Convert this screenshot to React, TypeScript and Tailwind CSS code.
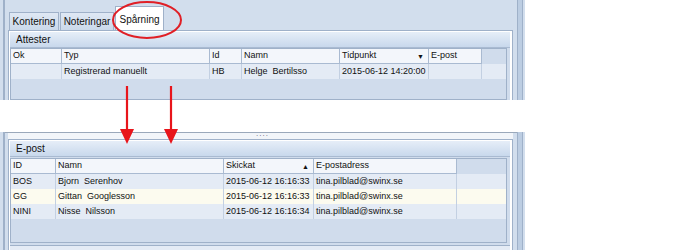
import React from 'react';

type Col = { label: string; w: number; sort?: 'up' | 'down' };

const attestCols: Col[] = [
  { label: 'Ok', w: 51 },
  { label: 'Typ', w: 148 },
  { label: 'Id', w: 32 },
  { label: 'Namn', w: 98 },
  { label: 'Tidpunkt', w: 89, sort: 'down' },
  { label: 'E-post', w: 53 },
];

const attestRows = [['', 'Registrerad manuellt', 'HB', 'Helge  Bertilsso', '2015-06-12 14:20:00', '']];

const mailCols: Col[] = [
  { label: 'ID', w: 45 },
  { label: 'Namn', w: 168 },
  { label: 'Skickat', w: 90, sort: 'up' },
  { label: 'E-postadress', w: 143 },
];

const mailRows = [
  ['BOS', 'Bjorn  Serenhov', '2015-06-12 16:16:33', 'tina.pilblad@swinx.se'],
  ['GG', 'Gittan  Googlesson', '2015-06-12 16:16:33', 'tina.pilblad@swinx.se'],
  ['NINI', 'Nisse  Nilsson', '2015-06-12 16:16:34', 'tina.pilblad@swinx.se'],
];

function Grid({ cols, rows, altIndex }: { cols: Col[]; rows: string[][]; altIndex?: number }) {
  return (
    <div className="flex-1 border border-[#9fb1c9] bg-[#d0dcec]">
      <div className="flex h-[15px]">
        {cols.map((c, i) => (
          <div
            key={i}
            style={{ width: c.w }}
            className="flex items-center justify-between border-r border-b border-[#a9bad1] bg-[#f3f6fb] pl-[2px] pr-[4px]"
          >
            <span>{c.label}</span>
            {c.sort === 'down' && <span className="text-[7px] leading-none">▼</span>}
            {c.sort === 'up' && <span className="text-[7px] leading-none">▲</span>}
          </div>
        ))}
      </div>
      {rows.map((r, ri) => (
        <div key={ri} className={`flex h-[15px] ${ri === altIndex ? 'bg-[#fcfbef]' : 'bg-[#e4ebf5]'}`}>
          {r.map((cell, ci) => (
            <div
              key={ci}
              style={{ width: cols[ci].w }}
              className="flex items-center whitespace-pre border-r border-[#c3d0e2] pl-[2px]"
            >
              {cell}
            </div>
          ))}
        </div>
      ))}
    </div>
  );
}

function HeaderBar({ title }: { title: string }) {
  return (
    <div className="flex h-[16px] items-center border-b border-[#a9bad1] bg-gradient-to-b from-[#e6eef8] to-[#c8d8ec] pl-[6px] text-[10px]">
      {title}
    </div>
  );
}

function Arrow({ x }: { x: number }) {
  return (
    <svg className="absolute top-[86px]" style={{ left: x - 8 }} width="16" height="60" viewBox="0 0 16 60">
      <line x1="8" y1="0" x2="8" y2="44" stroke="#e8151b" strokeWidth="2.2" />
      <polygon points="1,43 15,43 8,58" fill="#e8151b" />
    </svg>
  );
}

export default function App() {
  return (
    <div className="relative h-[250px] w-[700px] overflow-hidden bg-white font-['Liberation_Sans',Arial,sans-serif] text-[9px] text-[#111]">
      <div className="flex h-full w-[525px] flex-col">
        {/* top: tabs + Attester */}
        <div className="flex h-[100px] bg-[#d2deed]">
          <div className="ml-[3px] w-[2px] border-l border-r border-[#9fb1c9] bg-[#e8eef6]" />
          <div className="flex flex-1 flex-col pl-[3px] pr-[4px]">
            <div className="flex h-[30px] shrink-0 items-end pl-[1px] text-[10px]">
              <div className="flex h-[18px] w-[50px] items-center justify-center border border-b-0 border-[#9fb1c9] bg-gradient-to-b from-[#dfe8f4] to-[#cbd9ea]">
                Kontering
              </div>
              <div className="ml-[1px] flex h-[18px] w-[54px] items-center justify-center border border-b-0 border-[#9fb1c9] bg-gradient-to-b from-[#dfe8f4] to-[#cbd9ea]">
                Noteringar
              </div>
              <div className="ml-[1px] flex h-[24px] w-[49px] items-start justify-center border border-b-0 border-[#9fb1c9] bg-white pt-[5px]">
                Spårning
              </div>
            </div>
            <div className="flex flex-1 flex-col border-x border-t border-[#9fb1c9] bg-white pl-[1px] pr-[2px] pt-[1px]">
              <HeaderBar title="Attester" />
              <div className="flex flex-1 bg-[#d0dcec] pr-[3px]">
                <Grid cols={attestCols} rows={attestRows} />
              </div>
            </div>
          </div>
          <div className="mr-[2px] w-[6px] border-x border-[#9fb1c9] bg-[#bccde2]" />
        </div>

        {/* white gap */}
        <div className="h-[32px] bg-white" />

        {/* bottom: E-post */}
        <div className="flex flex-1 bg-[#d2deed]">
          <div className="ml-[3px] w-[2px] border-l border-r border-[#9fb1c9] bg-[#e8eef6]" />
          <div className="flex flex-1 flex-col border-t border-[#9aa8ba] pl-[3px] pr-[4px]">
            <div className="relative h-[6px] bg-[#f2f5f9]">
              <span className="absolute left-[248px] top-[-5px] text-[8px] tracking-[1px] text-[#667]">....</span>
            </div>
            <div className="flex flex-1 flex-col border-x border-t border-[#9fb1c9] bg-white pl-[1px] pr-[2px] pt-[1px]">
              <HeaderBar title="E-post" />
              <div className="flex flex-1 flex-col bg-[#d0dcec] pb-[2px] pr-[3px] pt-[1px]">
                <Grid cols={mailCols} rows={mailRows} altIndex={1} />
              </div>
              <div className="h-[5px] border-t border-[#9fb1c9] bg-[#e4ebf5]" />
            </div>
          </div>
          <div className="mr-[2px] w-[6px] border-x border-[#9fb1c9] bg-[#bccde2]" />
        </div>
      </div>

      {/* annotations */}
      <svg className="absolute left-[110px] top-0" width="76" height="42" viewBox="0 0 76 42">
        <ellipse cx="37" cy="20" rx="34" ry="18" fill="none" stroke="#e01f26" strokeWidth="2" />
      </svg>
      <Arrow x={127} />
      <Arrow x={171} />
    </div>
  );
}
